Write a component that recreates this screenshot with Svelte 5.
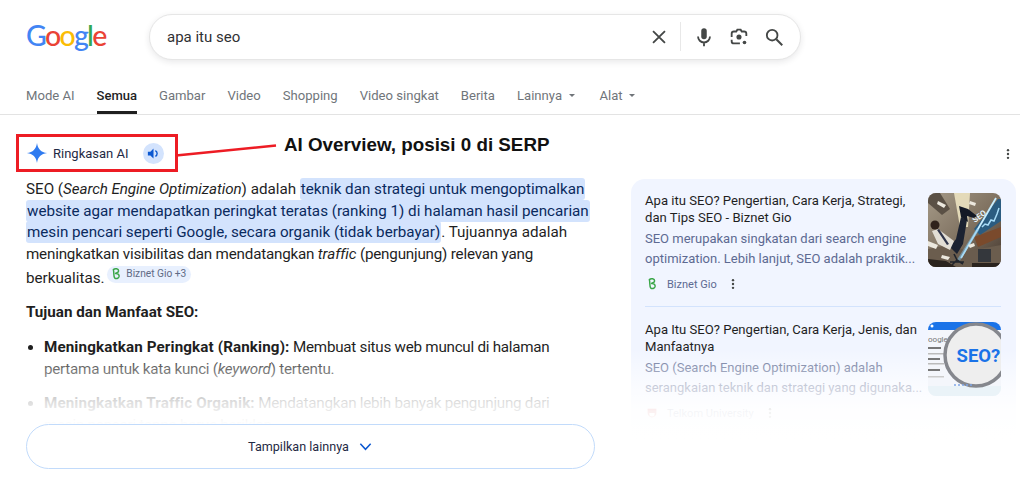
<script lang="ts">
  const tabs = [
    { label: "Mode AI" },
    { label: "Semua", active: true },
    { label: "Gambar" },
    { label: "Video" },
    { label: "Shopping" },
    { label: "Video singkat" },
    { label: "Berita" },
    { label: "Lainnya", menu: true },
    { label: "Alat", menu: true }
  ];
</script>

<div class="page">
  <header class="top">
    <div class="logo">
      <span class="blue">G</span><span class="red">o</span><span class="yellow">o</span><span class="blue">g</span><span class="green">l</span><span class="red">e</span>
    </div>
    <div class="search">
      <span class="query">apa itu seo</span>
      <svg class="ic clear" viewBox="0 0 24 24"><path d="M5.500 5.500l13 13M18.500 5.500l-13 13" fill="none" stroke="#444746" stroke-width="2" /></svg>
      <span class="sep"></span>
      <svg class="ic" viewBox="0 0 24 24"><rect x="9" y="2.500" width="6" height="12" rx="3" fill="#444746" /><path d="M5.500 11.500a6.500 6.500 0 0 0 13 0M12 18v4" fill="none" stroke="#444746" stroke-width="2" /></svg>
      <svg class="ic" viewBox="0 0 24 24"><path d="M4 12V8.500A2.500 2.500 0 0 1 6.500 6H9l1.200-2h3.600L15 6h2.500A2.500 2.500 0 0 1 20 8.500V11M4 15v1.500A2.500 2.500 0 0 0 6.500 19H13" fill="none" stroke="#444746" stroke-width="2" /><circle cx="12" cy="12" r="2.800" fill="#444746" /><circle cx="18" cy="18" r="2" fill="#444746" /></svg>
      <svg class="ic" viewBox="0 0 24 24"><circle cx="10" cy="10" r="5.800" fill="none" stroke="#444746" stroke-width="2" /><path d="M14.500 14.500L21 21" stroke="#444746" stroke-width="2.200" /></svg>
    </div>
  </header>

  <nav class="tabs">
    {#each tabs as t}
      <span class="tab" class:active={t.active}>{t.label}{#if t.menu}<i class="caret"></i>{/if}</span>
    {/each}
  </nav>

  <main class="content">
    <section class="answer">
      <div class="ai-head">
        <svg class="spark" viewBox="0 0 24 24"><path d="M12 1C12.800 7.500 16.500 11.200 23 12 16.500 12.800 12.800 16.500 12 23 11.200 16.500 7.500 12.800 1 12 7.500 11.200 11.200 7.500 12 1Z" fill="#2f7bf0" /></svg>
        <span class="ai-title">Ringkasan AI</span>
        <span class="speak">
          <svg viewBox="0 0 24 24"><path d="M3 9v6h4l5 5V4L7 9H3z" fill="#0b57d0" /><path d="M15 7.500a5 5 0 0 1 0 9" fill="none" stroke="#0b57d0" stroke-width="2.200" /></svg>
        </span>
      </div>

      <p class="para">
        SEO (<em>Search Engine Optimization</em>) adalah <mark>teknik dan strategi untuk mengoptimalkan website agar mendapatkan peringkat teratas (ranking 1) di halaman hasil pencarian mesin pencari seperti Google, secara organik (tidak berbayar)</mark>. Tujuannya adalah <span class="tight">meningkatkan visibilitas dan mendatangkan <em>traffic</em> (pengunjung) relevan yang</span> berkualitas.
        <span class="chip">
          <svg viewBox="0 0 16 16"><path d="M5 3c2-2 6-1 6 1.500 0 2-3 2.500-4 3 3-.5 5 1 4.500 3.500-.5 2-3.500 3-5 1.500C5 11 6 7 5 3z" fill="none" stroke="#3aa648" stroke-width="1.700" /></svg>
          Biznet Gio +3
        </span>
      </p>

      <p class="subhead">Tujuan dan Manfaat SEO:</p>

      <ul class="points">
        <li><strong>Meningkatkan Peringkat (Ranking):</strong> Membuat situs web muncul di halaman pertama untuk kata kunci (<em>keyword</em>) tertentu.</li>
        <li><strong>Meningkatkan Traffic Organik:</strong> Mendatangkan lebih banyak pengunjung dari mesin pencari tanpa harus beriklan.</li>
      </ul>

      <div class="fade"></div>
      <button class="more">
        Tampilkan lainnya
        <svg viewBox="0 0 16 16"><path d="M2.500 5l5.500 6 5.500-6" fill="none" stroke="#0b57d0" stroke-width="1.600" /></svg>
      </button>
    </section>

    <aside class="side">
      <div class="dots-row">
        <svg class="dots" viewBox="0 0 4 14"><circle cx="2" cy="2.500" r="1.400" /><circle cx="2" cy="7" r="1.400" /><circle cx="2" cy="11.500" r="1.400" /></svg>
      </div>
      <div class="panel">
        <article class="source">
          <div class="src-text">
            <h3>Apa itu SEO? Pengertian, Cara Kerja, Strategi, dan Tips SEO - Biznet Gio</h3>
            <p>SEO merupakan singkatan dari search engine optimization. Lebih lanjut, SEO adalah praktik...</p>
            <div class="site">
              <svg class="fav" viewBox="0 0 16 16"><path d="M5 3c2-2 6-1 6 1.500 0 2-3 2.500-4 3 3-.5 5 1 4.500 3.500-.5 2-3.500 3-5 1.500C5 11 6 7 5 3z" fill="none" stroke="#3aa648" stroke-width="1.700" /></svg>
              <span>Biznet Gio</span>
              <svg class="dots" viewBox="0 0 4 14"><circle cx="2" cy="2.500" r="1.400" /><circle cx="2" cy="7" r="1.400" /><circle cx="2" cy="11.500" r="1.400" /></svg>
            </div>
          </div>
          <svg class="thumb" viewBox="0 0 73 74">
            <defs>
              <linearGradient id="wall" x1="0" y1="0" x2="1" y2="1">
                <stop offset="0" stop-color="#a59a88" /><stop offset="0.550" stop-color="#7d6f5e" /><stop offset="1" stop-color="#43362d" />
              </linearGradient>
            </defs>
            <rect width="73" height="74" fill="url(#wall)" />
            <path d="M26 0h16l-2 34H32z" fill="#f2e9c6" opacity=".85" />
            <path d="M0 0h12l10 16-8 6L0 10z" fill="#5a5045" />
            <path d="M0 56l20-4 20 6 33-6v22H0z" fill="#6b5d4e" />
            <path d="M46 44l27-10v10L50 54z" fill="#7a4a2c" />
            <path d="M46 36L70 6h3v22L52 42z" fill="#2b5c80" />
            <path d="M54 34l3-3 3 1 3-5 3 1 3-7 2-6" fill="none" stroke="#a8dcf7" stroke-width="1.500" />
            <text x="47" y="30" class="thumb-mini" transform="rotate(-38 47 30)">SEO</text>
            <path d="M33 65L68 5" stroke="#c8eeff" stroke-width="1.800" />
            <path d="M30 68L50 36" stroke="#7fc4ee" stroke-width="3" opacity=".5" />
            <path d="M22 54l6-8 5-22 6 3-4 24-6 10z" fill="#1b2231" />
            <path d="M33 24l-2-11 9 3 9 7-3 2-7-2 1 6z" fill="#141925" />
            <path d="M4 38l6-2 16 12-4 9-12-6z" fill="#e2ded5" />
            <path d="M9 37l2-1 10 15-2 1z" fill="#30354a" />
            <circle cx="7" cy="32" r="4.500" fill="#2f221c" />
            <path d="M26 61l3 6M22 69h14M29 67l-5 5M29 67l6 4" stroke="#20242c" stroke-width="1.600" fill="none" />
            <rect x="50" y="56" width="13" height="13" fill="#34373c" />
            <path d="M0 48l10 4-2 4-8-3zM10 8l8 4-2 3-7-4zM42 8l6 2-1 3-6-2zM14 62l8 2-2 3-7-2zM40 52l6-2 1 3-5 2z" fill="#ece8de" />
            <path d="M0 66l18 2 10 6H0zM44 70h29v4H44z" fill="#2a231e" />
          </svg>
        </article>
        <article class="source second">
          <div class="src-text">
            <h3>Apa Itu SEO? Pengertian, Cara Kerja, Jenis, dan Manfaatnya</h3>
            <p>SEO (Search Engine Optimization) adalah serangkaian teknik dan strategi yang digunaka...</p>
            <div class="site">
              <svg class="fav" viewBox="0 0 16 16"><path d="M3 3h10v5a5 5 0 0 1-10 0z" fill="#c8313b" /><path d="M5 8h6v1a3 3 0 0 1-6 0z" fill="#fff" /></svg>
              <span>Telkom University</span>
              <svg class="dots" viewBox="0 0 4 14"><circle cx="2" cy="2.500" r="1.400" /><circle cx="2" cy="7" r="1.400" /><circle cx="2" cy="11.500" r="1.400" /></svg>
            </div>
          </div>
          <svg class="thumb" viewBox="0 0 73 74">
            <rect width="73" height="74" fill="#f4f6fb" />
            <rect width="73" height="8" fill="#1a73e8" />
            <circle cx="4" cy="4" r="1.500" fill="#fff" />
            <text x="0" y="20" class="thumb-g">oogle</text>
            <rect x="0" y="25" width="13" height="2" fill="#777" />
            <rect x="0" y="31" width="16" height="1.500" fill="#bbb" />
            <rect x="0" y="36" width="12" height="2" fill="#777" />
            <rect x="0" y="41" width="16" height="1.500" fill="#bbb" />
            <rect x="0" y="47" width="12" height="2" fill="#777" />
            <rect x="0" y="54" width="16" height="1.500" fill="#ccc" />
            <rect y="64" width="73" height="10" fill="#eaf3f8" />
            <circle cx="48" cy="33" r="31" fill="#eeeeee" stroke="#85878d" stroke-width="3.500" />
            <text x="28.500" y="40" class="thumb-seo">SEO?</text>
            <path d="M26 63h20" stroke="#7da7e8" stroke-width="1.500" stroke-dasharray="2 2" />
          </svg>
        </article>
        <div class="panel-fade"></div>
      </div>
    </aside>
  </main>

  <!-- annotation drawn on top of the screenshot -->
  <div class="note-box"></div>
  <svg class="note-line" viewBox="0 0 104 14"><path d="M2 12.500L102 2.500" stroke="#ed1c24" stroke-width="2.400" /></svg>
  <div class="note-text">AI Overview, posisi 0 di SERP</div>
</div>

<style>
  :global(body) {
    margin: 0;
    background: #fff;
  }

  .page {
    position: relative;
    width: 1020px;
    height: 486px;
    overflow: hidden;
    font-family: Roboto, "Liberation Sans", sans-serif;
    color: #1f1f1f;
  }

  .top {
    display: flex;
    align-items: center;
    height: 72px;
    padding-left: 26px;
    box-sizing: border-box;
  }

  .logo {
    width: 123px;
    margin-top: -2px;
    font-family: Lato, sans-serif;
    font-size: 28.500px;
    font-weight: 500;
    letter-spacing: -1.700px;
    line-height: 1;
  }
  .blue { color: #4285f4; }
  .red { color: #ea4335; }
  .yellow { color: #fbbc05; }
  .green { color: #34a853; }

  .search {
    display: flex;
    align-items: center;
    width: 652px;
    height: 46px;
    box-sizing: border-box;
    padding: 0 15px 0 17px;
    margin-top: 1px;
    border: 1px solid #e6e6e6;
    border-radius: 23px;
    box-shadow: 0 2px 6px rgba(32, 33, 36, 0.1);
    background: #fff;
  }

  .query {
    flex: 1;
    font-size: 15px;
    color: #303134;
  }

  .ic {
    width: 22px;
    height: 22px;
    margin-left: 13px;
  }
  .clear {
    margin-left: 0;
  }

  .sep {
    width: 1px;
    height: 29px;
    margin-left: 10px;
    margin-right: -1px;
    background: #e8e8e8;
  }

  .tabs {
    display: flex;
    height: 42px;
    padding-left: 26px;
    border-bottom: 1px solid #e3e3e3;
    gap: 22px;
  }

  .tab {
    display: flex;
    align-items: center;
    height: 42px;
    box-sizing: border-box;
    padding-top: 4px;
    font-size: 13.100px;
    color: #70757a;
  }

  .tab.active {
    font-weight: 500;
    font-size: 13px;
    color: #1f1f1f;
    border-bottom: 3px solid #1f1f1f;
    padding-top: 7px;
  }

  .caret {
    width: 0;
    height: 0;
    margin-left: 6.500px;
    margin-right: 3px;
    border-left: 3px solid transparent;
    border-right: 3px solid transparent;
    border-top: 3.500px solid #70757a;
  }

  .content {
    display: flex;
    align-items: flex-start;
  }

  .answer {
    position: relative;
    width: 569px;
    height: 371px;
    margin-left: 26px;
  }

  .ai-head {
    display: flex;
    align-items: center;
    height: 24px;
    margin-top: 26px;
  }

  .spark {
    width: 22px;
    height: 22px;
  }

  .ai-title {
    margin-left: 5px;
    font-size: 13px;
    color: #1f2a44;
  }

  .speak {
    display: flex;
    align-items: center;
    justify-content: center;
    width: 21px;
    height: 21px;
    margin-left: 14px;
    border-radius: 50%;
    background: #d3e3fd;
  }
  .speak svg {
    width: 15px;
    height: 15px;
  }

  .para {
    margin: 14px 0 0;
    font-size: 15.200px;
    line-height: 21.700px;
    color: #1f1f1f;
  }

  .para em {
    letter-spacing: -0.080px;
  }

  .tight {
    letter-spacing: -0.200px;
  }

  mark {
    padding: 2px 1px;
    border-radius: 3px;
    background: #d3e3fd;
    color: #0a2a5e;
    box-decoration-break: clone;
    -webkit-box-decoration-break: clone;
  }

  .chip {
    display: inline-flex;
    align-items: center;
    gap: 3px;
    height: 17px;
    margin-left: -1px;
    padding: 0 5px 0 2px;
    border-radius: 9px;
    background: #e8f0fe;
    font-size: 10.200px;
    color: #5f6b85;
    vertical-align: 1px;
  }
  .chip svg {
    width: 14px;
    height: 14px;
  }

  .subhead {
    margin: 12px 0 0;
    font-size: 15.200px;
    line-height: 22px;
    font-weight: 700;
    color: #1f1f1f;
  }

  .points {
    margin: 14px 0 0;
    padding: 0 25px 0 18px;
    font-size: 15.200px;
    line-height: 21.700px;
    letter-spacing: -0.250px;
  }
  .points li {
    margin-bottom: 13px;
  }
  .points strong {
    font-weight: 700;
    letter-spacing: 0.120px;
  }

  .fade {
    position: absolute;
    left: 0;
    right: -4px;
    top: 240px;
    bottom: 0;
    background: linear-gradient(rgba(255, 255, 255, 0) 0, rgba(255, 255, 255, 0.35) 13px, rgba(255, 255, 255, 0.85) 47px, #fff 70px);
  }

  .more {
    position: absolute;
    left: 0;
    bottom: 17px;
    display: flex;
    align-items: center;
    justify-content: center;
    gap: 9px;
    width: 569px;
    height: 45px;
    box-sizing: border-box;
    border: 1px solid #c2dbfb;
    border-radius: 23px;
    background: #fff;
    font-family: inherit;
    font-size: 12.600px;
    color: #1f2a44;
  }
  .more svg {
    width: 15px;
    height: 15px;
  }

  .side {
    width: 385px;
    margin-left: 36px;
  }

  .dots-row {
    display: flex;
    justify-content: flex-end;
    height: 64px;
    padding-top: 33px;
    box-sizing: border-box;
    margin-right: 6px;
  }

  .dots {
    width: 4px;
    height: 12px;
    fill: #444746;
  }

  .panel {
    position: relative;
    height: 307px;
    padding: 14px 15px 0 14px;
    box-sizing: border-box;
    border-radius: 14px 14px 0 0;
    background: #f1f5ff;
    overflow: hidden;
  }

  .source {
    display: flex;
    justify-content: space-between;
    height: 113px;
  }

  .source.second {
    border-top: 1px solid #d3e3fd;
    padding-top: 15px;
  }

  .src-text {
    width: 281px;
  }

  .source h3 {
    margin: 0;
    font-size: 13.100px;
    line-height: 16.500px;
    font-weight: 400;
    color: #1f1f1f;
  }

  .source p {
    margin: 3px 0 0;
    font-size: 13px;
    line-height: 19.500px;
    color: #5d6a92;
  }

  .site {
    display: flex;
    align-items: center;
    margin-top: 9px;
    font-size: 11px;
    color: #5d6a92;
  }

  .fav {
    width: 14px;
    height: 14px;
    margin-right: 8px;
  }

  .site .dots {
    margin-left: 14px;
  }

  .thumb {
    position: relative;
    z-index: 1;
    flex: none;
    width: 73px;
    height: 74px;
    border-radius: 8px;
  }

  .thumb-g {
    font-family: Roboto, sans-serif;
    font-size: 8px;
    fill: #777;
  }

  .thumb-seo {
    font-family: Roboto, sans-serif;
    font-size: 18.500px;
    font-weight: 700;
    fill: #1a73e8;
  }

  .thumb-mini {
    font-family: Roboto, sans-serif;
    font-size: 8px;
    font-weight: 700;
    fill: #e6f4fb;
  }

  .panel-fade {
    position: absolute;
    left: 0;
    right: 0;
    top: 170px;
    bottom: 0;
    background: linear-gradient(rgba(255, 255, 255, 0) 0, rgba(255, 255, 255, 0.3) 17px, rgba(255, 255, 255, 0.65) 37px, rgba(255, 255, 255, 0.93) 62px, #fff 90px);
  }

  .note-box {
    position: absolute;
    left: 16px;
    top: 134px;
    width: 162px;
    height: 38px;
    box-sizing: border-box;
    border: 3px solid #ed1c24;
  }

  .note-line {
    position: absolute;
    left: 174px;
    top: 143px;
    width: 104px;
    height: 14px;
  }

  .note-text {
    position: absolute;
    left: 284px;
    top: 134px;
    font-family: "Liberation Sans", Arial, sans-serif;
    font-size: 18.800px;
    font-weight: 700;
    color: #111;
    white-space: nowrap;
  }
</style>
